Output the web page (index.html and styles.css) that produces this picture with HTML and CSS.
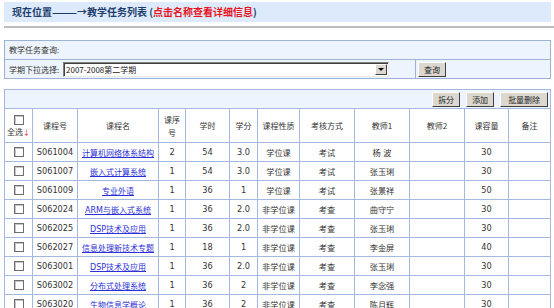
FILE: index.html
```html
<!DOCTYPE html>
<html>
	<head>
		<meta charset="UTF-8">
		<title>教学任务列表</title>
		<link rel="stylesheet" href="styles.css">
	</head>
	<body>
		<div class="page">
			<div class="location">现在位置———→教学任务列表 <span class="paren">(</span><span class="tip">点击名称查看详细信息</span><span class="paren">)</span></div>
			<div class="rule"></div>

			<!-- 查询 -->
			<div class="query">
				<div class="query-title">教学任务查询:</div>
				<div class="query-row">
					<div class="query-left">
						<span class="label">学期下拉选择:</span>
						<div class="select">
							<span class="select-text">2007-2008第二学期</span>
							<span class="select-btn"><i class="arrow"></i></span>
						</div>
					</div>
					<div class="query-right">
						<span class="btn">查询</span>
					</div>
				</div>
			</div>

			<!-- 列表 -->
			<table class="list">
				<colgroup>
					<col style="width:28px"><col style="width:45px"><col style="width:81px"><col style="width:27px">
					<col style="width:44px"><col style="width:28px"><col style="width:42px"><col style="width:55px">
					<col style="width:55px"><col style="width:55px"><col style="width:44px"><col style="width:42px">
				</colgroup>
				<tr class="toolbar">
					<td colspan="12">
						<span class="btn">拆分</span><span class="btn">添加</span><span class="btn wide">批量删除</span>
					</td>
				</tr>
				<tr class="head">
					<td><span class="chk"></span><br>全选<span class="down">↓</span></td>
					<td>课程号</td>
					<td>课程名</td>
					<td>课序<br>号</td>
					<td>学时</td>
					<td>学分</td>
					<td>课程性质</td>
					<td>考核方式</td>
					<td>教师1</td>
					<td>教师2</td>
					<td>课容量</td>
					<td>备注</td>
				</tr>
				<tr><td><span class="chk"></span></td><td>S061004</td><td><a href="#">计算机网络体系结构</a></td><td>2</td><td>54</td><td>3.0</td><td>学位课</td><td>考试</td><td>杨 波</td><td></td><td>30</td><td></td></tr>
				<tr><td><span class="chk"></span></td><td>S061007</td><td><a href="#">嵌入式计算系统</a></td><td>1</td><td>54</td><td>3.0</td><td>学位课</td><td>考试</td><td>张玉琍</td><td></td><td>30</td><td></td></tr>
				<tr><td><span class="chk"></span></td><td>S061009</td><td><a href="#">专业外语</a></td><td>1</td><td>36</td><td>1</td><td>学位课</td><td>考试</td><td>张景祥</td><td></td><td>50</td><td></td></tr>
				<tr><td><span class="chk"></span></td><td>S062024</td><td><a href="#">ARM与嵌入式系统</a></td><td>1</td><td>36</td><td>2.0</td><td>非学位课</td><td>考查</td><td>曲守宁</td><td></td><td>30</td><td></td></tr>
				<tr><td><span class="chk"></span></td><td>S062025</td><td><a href="#">DSP技术及应用</a></td><td>1</td><td>36</td><td>2.0</td><td>非学位课</td><td>考查</td><td>张玉琍</td><td></td><td>30</td><td></td></tr>
				<tr><td><span class="chk"></span></td><td>S062027</td><td><a href="#">信息处理新技术专题</a></td><td>1</td><td>18</td><td>1</td><td>非学位课</td><td>考查</td><td>李金屏</td><td></td><td>40</td><td></td></tr>
				<tr><td><span class="chk"></span></td><td>S063001</td><td><a href="#">DSP技术及应用</a></td><td>1</td><td>36</td><td>2.0</td><td>非学位课</td><td>考查</td><td>张玉琍</td><td></td><td>30</td><td></td></tr>
				<tr><td><span class="chk"></span></td><td>S063002</td><td><a href="#">分布式处理系统</a></td><td>1</td><td>36</td><td>2</td><td>非学位课</td><td>考查</td><td>李念强</td><td></td><td>30</td><td></td></tr>
				<tr><td><span class="chk"></span></td><td>S063020</td><td><a href="#">生物信息学概论</a></td><td>1</td><td>36</td><td>2</td><td>非学位课</td><td>考查</td><td>陈月辉</td><td></td><td>30</td><td></td></tr>
			</table>
		</div>
	</body>
</html>
```
FILE: styles.css
```css
*{
	box-sizing: border-box;
	margin: 0;
	padding: 0;
}
body{
	background: #fff;
	font-family: "DejaVu Sans", "Noto Sans CJK SC", sans-serif;
	font-size: 8.2px;
	color: #333;
}
.page{
	padding: 2px 3px 0 4px;
}

/* 位置栏 */
.location{
	height: 20px;
	line-height: 20px;
	padding-left: 8px;
	background: #dceafc;
	font-family: "Noto Sans CJK SC", sans-serif;
	font-size: 10px;
	font-weight: bold;
	color: #1e3d6b;
}
.location .tip{
	color: #e8141c;
}
.rule{
	height: 2px;
	margin: 4px -3px 0 0;
	background: #bdbdbd;
}

/* 查询 */
.query{
	margin-top: 12px;
	border: 1px solid #9db3d6;
	background: #eef4fd;
	font-family: "Noto Sans CJK SC", sans-serif;
	font-size: 8px;
}
.query-title{
	height: 19px;
	line-height: 18px;
	padding-left: 4px;
	border-bottom: 1px solid #9db3d6;
}
.query-row{
	display: flex;
	height: 18px;
}
.query-left{
	width: 411px;
	display: flex;
	align-items: center;
	padding-left: 4px;
	border-right: 1px solid #9db3d6;
}
.query-right{
	display: flex;
	align-items: center;
	padding-left: 2px;
}
.label{
	width: 54px;
}
.select{
	width: 326px;
	height: 15px;
	display: flex;
	align-items: center;
	justify-content: space-between;
	background: #fff;
	border: 1px solid;
	border-color: #808080 #e8e8e8 #e8e8e8 #808080;
	box-shadow: inset 1px 1px 0 #404040;
	padding-left: 2px;
	color: #222;
}
.select-btn{
	width: 12px;
	height: 11px;
	margin-right: 1px;
	background: #dcd8d0;
	border: 1px solid;
	border-color: #fff #404040 #404040 #fff;
	display: flex;
	align-items: center;
	justify-content: center;
}
.arrow{
	width: 0;
	height: 0;
	border-left: 3px solid transparent;
	border-right: 3px solid transparent;
	border-top: 3px solid #000;
}

/* 按钮 */
.btn{
	display: inline-block;
	height: 15px;
	line-height: 13px;
	padding: 0 4px;
	background: #dcd8d0;
	border: 1px solid;
	border-color: #fff #404040 #404040 #fff;
	font-family: "Noto Sans CJK SC", sans-serif;
	font-size: 8px;
	color: #222;
	text-align: center;
}
.query .btn{
	width: 28px;
}

/* 列表 */
.list{
	margin-top: 10px;
	width: 547px;
	table-layout: fixed;
	border-collapse: collapse;
	border: 1px solid #8fa9d3;
}
.list td{
	border: 1px solid #a3b9de;
	height: 19px;
	text-align: center;
	white-space: nowrap;
	overflow: hidden;
}
.toolbar td{
	background: #eef4fd;
	text-align: right;
	padding-right: 2px;
}
.toolbar .btn{
	width: 28px;
	margin-left: 6px;
	padding: 0;
}
.toolbar .btn.wide{
	width: 48px;
}
.head td{
	height: 34px;
	font-family: "Noto Sans CJK SC", sans-serif;
	font-size: 8px;
	line-height: 13px;
}
.down{
	color: #e8141c;
	font-size: 7px;
}
.chk{
	display: inline-block;
	width: 10px;
	height: 10px;
	vertical-align: middle;
	background: #fff;
	border: 1px solid #6e6e6e;
	box-shadow: inset 1px 1px 0 #c8c8c8;
}
.list a{
	color: #2d2fd8;
	text-decoration: underline;
	font-size: 8px;
}
```
